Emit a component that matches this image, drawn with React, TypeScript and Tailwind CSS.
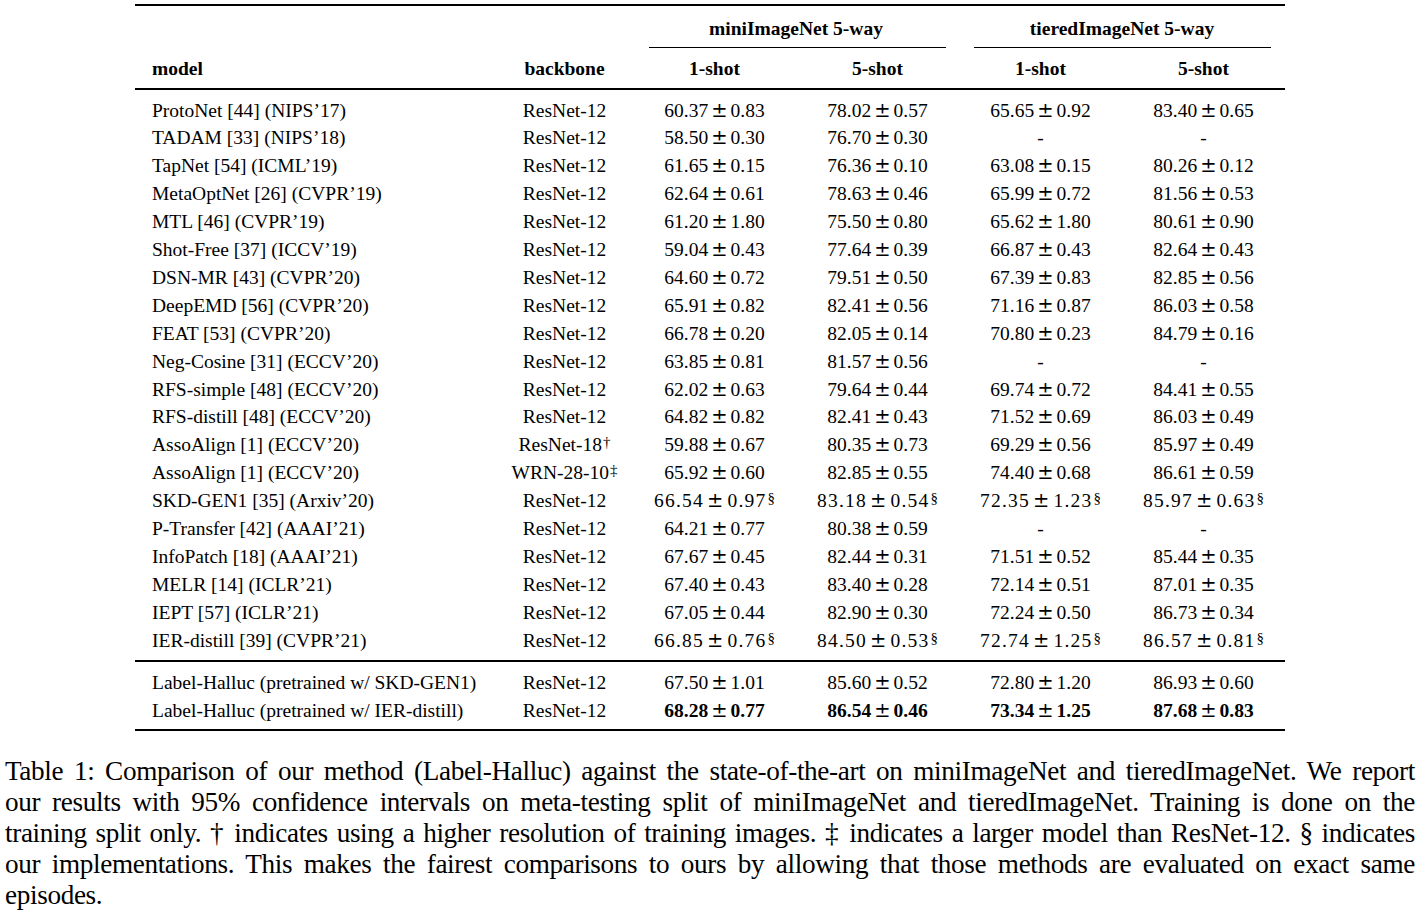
import React from "react";

type Row = [string, string, string, string, string, string];

const rows: Row[] = [
  ["ProtoNet [44] (NIPS’17)", "ResNet-12", "60.37 ± 0.83", "78.02 ± 0.57", "65.65 ± 0.92", "83.40 ± 0.65"],
  ["TADAM [33] (NIPS’18)", "ResNet-12", "58.50 ± 0.30", "76.70 ± 0.30", "-", "-"],
  ["TapNet [54] (ICML’19)", "ResNet-12", "61.65 ± 0.15", "76.36 ± 0.10", "63.08 ± 0.15", "80.26 ± 0.12"],
  ["MetaOptNet [26] (CVPR’19)", "ResNet-12", "62.64 ± 0.61", "78.63 ± 0.46", "65.99 ± 0.72", "81.56 ± 0.53"],
  ["MTL [46] (CVPR’19)", "ResNet-12", "61.20 ± 1.80", "75.50 ± 0.80", "65.62 ± 1.80", "80.61 ± 0.90"],
  ["Shot-Free [37] (ICCV’19)", "ResNet-12", "59.04 ± 0.43", "77.64 ± 0.39", "66.87 ± 0.43", "82.64 ± 0.43"],
  ["DSN-MR [43] (CVPR’20)", "ResNet-12", "64.60 ± 0.72", "79.51 ± 0.50", "67.39 ± 0.83", "82.85 ± 0.56"],
  ["DeepEMD [56] (CVPR’20)", "ResNet-12", "65.91 ± 0.82", "82.41 ± 0.56", "71.16 ± 0.87", "86.03 ± 0.58"],
  ["FEAT [53] (CVPR’20)", "ResNet-12", "66.78 ± 0.20", "82.05 ± 0.14", "70.80 ± 0.23", "84.79 ± 0.16"],
  ["Neg-Cosine [31] (ECCV’20)", "ResNet-12", "63.85 ± 0.81", "81.57 ± 0.56", "-", "-"],
  ["RFS-simple [48] (ECCV’20)", "ResNet-12", "62.02 ± 0.63", "79.64 ± 0.44", "69.74 ± 0.72", "84.41 ± 0.55"],
  ["RFS-distill [48] (ECCV’20)", "ResNet-12", "64.82 ± 0.82", "82.41 ± 0.43", "71.52 ± 0.69", "86.03 ± 0.49"],
  ["AssoAlign [1] (ECCV’20)", "ResNet-18†", "59.88 ± 0.67", "80.35 ± 0.73", "69.29 ± 0.56", "85.97 ± 0.49"],
  ["AssoAlign [1] (ECCV’20)", "WRN-28-10‡", "65.92 ± 0.60", "82.85 ± 0.55", "74.40 ± 0.68", "86.61 ± 0.59"],
  ["SKD-GEN1 [35] (Arxiv’20)", "ResNet-12", "66.54 ± 0.97§", "83.18 ± 0.54§", "72.35 ± 1.23§", "85.97 ± 0.63§"],
  ["P-Transfer [42] (AAAI’21)", "ResNet-12", "64.21 ± 0.77", "80.38 ± 0.59", "-", "-"],
  ["InfoPatch [18] (AAAI’21)", "ResNet-12", "67.67 ± 0.45", "82.44 ± 0.31", "71.51 ± 0.52", "85.44 ± 0.35"],
  ["MELR [14] (ICLR’21)", "ResNet-12", "67.40 ± 0.43", "83.40 ± 0.28", "72.14 ± 0.51", "87.01 ± 0.35"],
  ["IEPT [57] (ICLR’21)", "ResNet-12", "67.05 ± 0.44", "82.90 ± 0.30", "72.24 ± 0.50", "86.73 ± 0.34"],
  ["IER-distill [39] (CVPR’21)", "ResNet-12", "66.85 ± 0.76§", "84.50 ± 0.53§", "72.74 ± 1.25§", "86.57 ± 0.81§"],
];

const ours: Row[] = [
  ["Label-Halluc (pretrained w/ SKD-GEN1)", "ResNet-12", "67.50 ± 1.01", "85.60 ± 0.52", "72.80 ± 1.20", "86.93 ± 0.60"],
  ["Label-Halluc (pretrained w/ IER-distill)", "ResNet-12", "68.28 ± 0.77", "86.54 ± 0.46", "73.34 ± 1.25", "87.68 ± 0.83"],
];

const caption = [
  "Table 1: Comparison of our method (Label-Halluc) against the state-of-the-art on miniImageNet and tieredImageNet. We report",
  "our results with 95% confidence intervals on meta-testing split of miniImageNet and tieredImageNet. Training is done on the",
  "training split only. † indicates using a higher resolution of training images. ‡ indicates a larger model than ResNet-12. § indicates",
  "our implementations. This makes the fairest comparisons to ours by allowing that those methods are evaluated on exact same",
];

const grid = "grid grid-cols-[361px_137px_163px_163px_163px_163px] items-center";

// splits a trailing footnote mark off so it can be raised
const Cell = ({ value, bold }: { value: string; bold?: boolean }) => {
  const last = value.slice(-1);
  const hasMark = last === "§" || last === "†" || last === "‡";
  const text = hasMark ? value.slice(0, -1) : value;
  const [num, err] = text.split(" ± ");
  const isStat = err !== undefined;
  return (
    <div className={`text-center whitespace-nowrap ${last === "§" ? "tracking-[1.2px]" : ""}`}>
      {isStat ? (
        <span className={bold ? "font-bold" : ""}>
          {num}
          <span className="mx-[3px] font-['DejaVu_Serif',serif] font-normal">±</span>
          {err}
        </span>
      ) : (
        <span>{text}</span>
      )}
      {hasMark && <sup className="text-[15px] relative -top-[4px] ml-[1px] tracking-normal">{last}</sup>}
    </div>
  );
};

const BodyRow = ({ row, bold }: { row: Row; bold?: boolean }) => (
  <div className={`${grid} h-[27.9px]`}>
    <div className="pl-[17px] whitespace-nowrap">{row[0]}</div>
    <Cell value={row[1]} />
    <Cell value={row[2]} bold={bold} />
    <Cell value={row[3]} bold={bold} />
    <Cell value={row[4]} bold={bold} />
    <Cell value={row[5]} bold={bold} />
  </div>
);

export default function App() {
  return (
    <div className="min-h-screen bg-white text-black font-['Liberation_Serif','Times_New_Roman',serif] pt-[4px]">
      <div className="ml-[135px] w-[1150px] text-[19.5px] leading-[28px]">
        <div className="h-[2px] bg-black" />

        <div className={`${grid} pt-[9px] pb-[4px] font-bold`}>
          <div />
          <div />
          <div className="col-span-2 text-center">miniImageNet 5-way</div>
          <div className="col-span-2 text-center">tieredImageNet 5-way</div>
        </div>
        <div className={grid}>
          <div />
          <div />
          <div className="col-span-2 pl-[16px] pr-[13px]">
            <div className="h-[1.3px] bg-black" />
          </div>
          <div className="col-span-2 pl-[15px] pr-[14px]">
            <div className="h-[1.3px] bg-black" />
          </div>
        </div>

        <div className={`${grid} pt-[7px] pb-[5px] font-bold`}>
          <div className="pl-[17px]">model</div>
          <div className="text-center">backbone</div>
          <div className="text-center">1-shot</div>
          <div className="text-center">5-shot</div>
          <div className="text-center">1-shot</div>
          <div className="text-center">5-shot</div>
        </div>
        <div className="h-[1.3px] bg-black" />

        <div className="pt-[7px] pb-[6px]">
          {rows.map((r, i) => (
            <BodyRow key={i} row={r} />
          ))}
        </div>
        <div className="h-[1.3px] bg-black" />

        <div className="pt-[7px] pb-[5px]">
          <BodyRow row={ours[0]} />
          <BodyRow row={ours[1]} bold />
        </div>
        <div className="h-[2px] bg-black" />
      </div>

      <div className="ml-[5px] w-[1410px] mt-[25px] text-[27.2px] leading-[30.8px] tracking-[-0.35px]">
        {caption.map((line, i) => (
          <div key={i} className="whitespace-nowrap text-justify [text-align-last:justify]">
            {line}
          </div>
        ))}
        <div>episodes.</div>
      </div>
    </div>
  );
}
